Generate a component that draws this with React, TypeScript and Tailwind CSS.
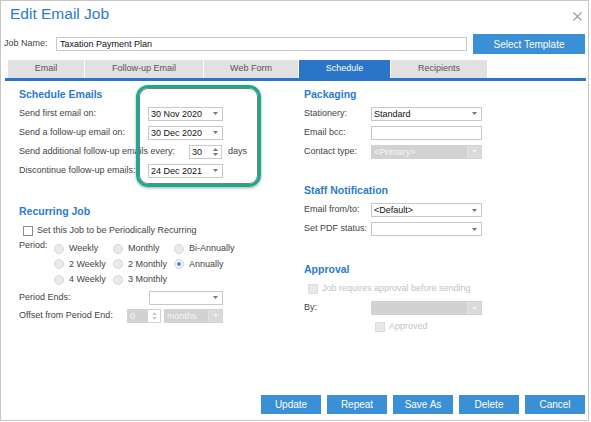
import clsx from "clsx";

const font = "font-['Liberation_Sans',Arial,Helvetica,sans-serif]";

function Caret({ color = "#777", up = false }: { color?: string; up?: boolean }) {
  return (
    <svg width="5" height="3" viewBox="0 0 5 3">
      <path d={up ? "M0 3h5L2.5 0z" : "M0 0h5L2.5 3z"} fill={color} />
    </svg>
  );
}

function Select({ value = "", className, disabled }: { value?: string; className: string; disabled?: boolean }) {
  return (
    <div
      className={clsx(
        "flex h-[14px] items-stretch border",
        disabled ? "border-[#d2d2d2] bg-[#d2d2d2] text-[#f6f6f6]" : "border-[#c8c8c8] bg-white text-[#111]",
        className
      )}
    >
      <span className="flex-1 truncate pl-[2px] leading-[12px]">{value}</span>
      <span className={clsx("flex w-[14px] items-center justify-center", disabled && "border-l border-[#e4e4e4] bg-[#dadada]")}>
        <Caret color={disabled ? "#f2f2f2" : "#777"} />
      </span>
    </div>
  );
}

function Spin({ value, className, disabled }: { value: string; className: string; disabled?: boolean }) {
  return (
    <div
      className={clsx(
        "flex h-[14px] items-stretch border",
        disabled ? "border-[#d2d2d2] bg-[#d2d2d2] text-[#f6f6f6]" : "border-[#c8c8c8] bg-white text-[#111]",
        className
      )}
    >
      <span className="flex-1 pl-[2px] leading-[12px]">{value}</span>
      <span className={clsx("flex w-[12px] flex-col items-center justify-center gap-[2px]", disabled && "bg-white")}>
        <Caret up color={disabled ? "#ccc" : "#777"} />
        <Caret color={disabled ? "#ccc" : "#777"} />
      </span>
    </div>
  );
}

function Check({ disabled }: { disabled?: boolean }) {
  return (
    <span
      className={clsx(
        "block size-[10px] shrink-0 border",
        disabled ? "border-[#dddddd] bg-[#e8e8e8]" : "border-[#8c8c8c] bg-white"
      )}
    />
  );
}

function Radio({ label, checked }: { label: string; checked?: boolean }) {
  return (
    <div className="flex h-[15.5px] items-center gap-[5px]">
      <span
        className={clsx(
          "flex size-[10px] items-center justify-center rounded-full border",
          checked ? "border-[#d0d0d0] bg-[#f4f4f4]" : "border-[#d6d6d6] bg-[#eaeaea]"
        )}
      >
        {checked && <span className="size-[4px] rounded-full bg-[#4a93e0]" />}
      </span>
      <span>{label}</span>
    </div>
  );
}

function Heading({ children, className }: { children: string; className?: string }) {
  return (
    <div className={clsx("flex h-[19px] items-center text-[10.5px] font-bold text-[#2b7bd0]", className)}>{children}</div>
  );
}

function Row({ label, labelClass, children, className }: { label: string; labelClass: string; children?: React.ReactNode; className?: string }) {
  return (
    <div className={clsx("flex h-[19px] items-center", className)}>
      <span className={clsx("shrink-0 whitespace-nowrap", labelClass)}>{label}</span>
      {children}
    </div>
  );
}

const tabs = [
  { name: "Email", w: "w-[76px]" },
  { name: "Follow-up Email", w: "w-[118px]" },
  { name: "Web Form", w: "w-[94px]" },
  { name: "Schedule", w: "w-[91px]", active: true },
  { name: "Recipients", w: "w-[96px]" },
];

export default function App() {
  return (
    <div className={clsx("h-[422px] w-[591px] bg-white text-[9px] text-[#444]", font)}>
      <div className="relative flex h-[421px] w-[589px] flex-col border border-[#c6c6c6]">
        {/* header */}
        <div className="flex h-[33px] items-start justify-between">
          <h1 className="pl-[9px] pt-[4px] text-[15.5px] leading-[18px] text-[#2b7bd0]">Edit Email Job</h1>
          <svg className="mr-[6px] mt-[11px]" width="9" height="9" viewBox="0 0 9 9">
            <path d="M0.5 0.5l8 8M8.5 0.5l-8 8" stroke="#9a9a9a" strokeWidth="1.1" />
          </svg>
        </div>

        {/* job name */}
        <div className="flex h-[20px] items-center">
          <span className="w-[55px] pl-[3px]">Job Name:</span>
          <div className="h-[14px] w-[411px] border border-[#c8c8c8] pl-[3px] leading-[12px] text-[#111]">Taxation Payment Plan</div>
          <button className="ml-[6px] h-[20px] w-[112px] bg-[#3a8fd5] text-[10px] text-white">Select Template</button>
        </div>

        {/* tabs */}
        <div className="mt-[6px] flex h-[18px] gap-[1px] pl-[7px]">
          {tabs.map((t) => (
            <div
              key={t.name}
              className={clsx(
                "flex items-center justify-center",
                t.w,
                t.active ? "bg-[#2b75c9] text-white" : "bg-[#e1e1e1] text-[#555]"
              )}
            >
              {t.name}
            </div>
          ))}
        </div>
        <div className="ml-[3.5px] h-[3px] w-[581px] bg-[#2b75c9]" />

        {/* body */}
        <div className="flex flex-1">
          <div className="w-[303px] pl-[18px] pt-[4px]">
            <Heading>Schedule Emails</Heading>
            <Row label="Send first email on:" labelClass="w-[129px]">
              <Select value="30 Nov 2020" className="w-[75px]" />
            </Row>
            <Row label="Send a follow-up email on:" labelClass="w-[129px]">
              <Select value="30 Dec 2020" className="w-[75px]" />
            </Row>
            <Row label="Send additional follow-up emails every:" labelClass="w-[170px]">
              <Spin value="30" className="w-[33px]" />
              <span className="ml-[6px]">days</span>
            </Row>
            <Row label="Discontinue follow-up emails:" labelClass="w-[129px]">
              <Select value="24 Dec 2021" className="w-[75px]" />
            </Row>

            <Heading className="mt-[22px]">Recurring Job</Heading>
            <div className="flex h-[20px] items-center gap-[4px] pl-[4px]">
              <Check />
              <span>Set this Job to be Periodically Recurring</span>
            </div>
            <div className="flex">
              <span className="w-[35px] leading-[9px]">Period:</span>
              <div className="grid grid-cols-[59px_61px_auto]">
                <Radio label="Weekly" />
                <Radio label="Monthly" />
                <Radio label="Bi-Annually" />
                <Radio label="2 Weekly" />
                <Radio label="2 Monthly" />
                <Radio label="Annually" checked />
                <Radio label="4 Weekly" />
                <Radio label="3 Monthly" />
              </div>
            </div>
            <div className="mt-[1px] flex h-[18px] items-center">
              <span className="w-[130px]">Period Ends:</span>
              <Select className="w-[74px]" />
            </div>
            <div className="flex h-[18px] items-center">
              <span className="w-[108px]">Offset from Period End:</span>
              <Spin value="0" disabled className="w-[34px]" />
              <Select value="months" disabled className="ml-[3px] w-[59px]" />
            </div>
          </div>

          <div className="w-[200px] pt-[4px]">
            <Heading>Packaging</Heading>
            <Row label="Stationery:" labelClass="w-[67px]">
              <Select value="Standard" className="w-[111px]" />
            </Row>
            <Row label="Email bcc:" labelClass="w-[67px]">
              <div className="h-[14px] w-[111px] border border-[#c8c8c8] bg-white" />
            </Row>
            <Row label="Contact type:" labelClass="w-[67px]">
              <Select value="<Primary>" disabled className="w-[111px]" />
            </Row>

            <Heading className="mt-[20.5px]">Staff Notification</Heading>
            <Row label="Email from/to:" labelClass="w-[67px]">
              <Select value="<Default>" className="w-[111px]" />
            </Row>
            <Row label="Set PDF status:" labelClass="w-[67px]">
              <Select className="w-[111px]" />
            </Row>

            <Heading className="mt-[22px]">Approval</Heading>
            <div className="flex h-[19px] items-center gap-[4px] pl-[4px] text-[#c2c2c2]">
              <Check disabled />
              <span>Job requires approval before sending</span>
            </div>
            <Row label="By:" labelClass="w-[67px]">
              <Select disabled className="w-[111px]" />
            </Row>
            <div className="flex h-[19px] items-center gap-[4px] pl-[71px] text-[#c2c2c2]">
              <Check disabled />
              <span>Approved</span>
            </div>
          </div>
        </div>

        {/* footer */}
        <div className="mb-[6px] flex h-[19px] justify-end gap-[6px] pr-[3px]">
          {["Update", "Repeat", "Save As", "Delete", "Cancel"].map((b) => (
            <button key={b} className="w-[60px] bg-[#3a8fd5] text-[10px] text-white">
              {b}
            </button>
          ))}
        </div>

        {/* highlight annotation */}
        <div className="pointer-events-none absolute left-[135px] top-[84px] h-[102px] w-[125px] rounded-[12px] border-[3px] border-[#1aa993] shadow-[inset_0_0_0_1px_rgba(70,70,70,0.7),0_1px_3px_rgba(0,0,0,0.35)]" />
      </div>
    </div>
  );
}
